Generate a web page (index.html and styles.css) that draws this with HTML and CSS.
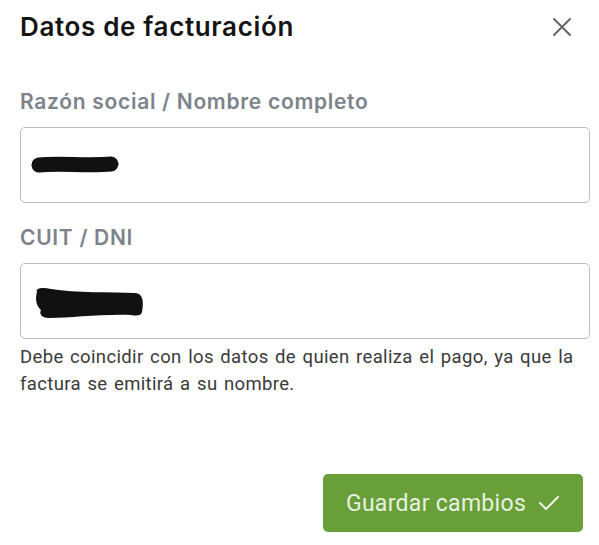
FILE: index.html
```html
<!DOCTYPE html>
<html lang="es">
<head>
<meta charset="utf-8">
<title>Datos de facturación</title>
<link rel="stylesheet" href="styles.css">
</head>
<body>
<div class="modal">
  <header class="modal-header">
    <h1 class="modal-title">Datos de facturación</h1>
    <button class="close-btn" aria-label="Cerrar">
      <svg width="20" height="20" viewBox="0 0 20 20"><path d="M2 2 L18 18 M18 2 L2 18" stroke="#666" stroke-width="2" fill="none" stroke-linecap="round"/></svg>
    </button>
  </header>
  <div class="field">
    <label class="field-label">Razón social / Nombre completo</label>
    <div class="field-input">
      <svg class="redact redact-1" width="90" height="22" viewBox="0 0 90 22"><path d="M8 11 C 25 9, 60 12, 80 10" stroke="#111" stroke-width="15" fill="none" stroke-linecap="round"/></svg>
    </div>
  </div>
  <div class="field">
    <label class="field-label">CUIT / DNI</label>
    <div class="field-input">
      <svg class="redact redact-2" width="120" height="36" viewBox="0 0 120 36"><path d="M6 6 C 4 2, 12 1, 20 3 C 45 7, 80 6, 104 7 C 112 7, 113 16, 111 26 C 110 30, 106 30, 100 29 C 70 28, 40 32, 18 32 C 10 32, 8 27, 10 24 C 5 20, 4 12, 6 6 Z" fill="#111"/></svg>
    </div>
    <p class="field-help">Debe coincidir con los datos de quien realiza el pago, ya que la factura se emitirá a su nombre.</p>
  </div>
  <footer class="modal-footer">
    <button class="save-btn">Guardar cambios
      <svg width="22" height="18" viewBox="0 0 22 18"><path d="M2 9 L8 15 L20 3" stroke="#eef4e8" stroke-width="2" fill="none" stroke-linecap="round" stroke-linejoin="round"/></svg>
    </button>
  </footer>
</div>
</body>
</html>
```

FILE: styles.css
```css
* { box-sizing: border-box; }
html, body { margin: 0; padding: 0; background: #fff; }
body { font-family: Inter, "Noto Sans", sans-serif; }

.modal {
  width: 570px;
  margin-left: 20px;
  padding-top: 12px;
}

.modal-header {
  display: flex;
  align-items: center;
  justify-content: space-between;
  padding-right: 18px;
}

.modal-title {
  margin: 0;
  font-size: 26px;
  letter-spacing: 0.65px;
  font-weight: 600;
  color: #141414;
  line-height: 30px;
}

.close-btn {
  border: 0;
  background: none;
  padding: 0;
  width: 20px;
  height: 20px;
  display: flex;
  cursor: pointer;
}

.field { margin-top: 48px; }
.field + .field { margin-top: 23px; }

.field-label {
  display: block;
  font-size: 21px;
  letter-spacing: 0.7px;
  font-weight: 600;
  color: #7d838a;
  line-height: 24px;
  margin-bottom: 13px;
}

.field-input {
  height: 76px;
  border: 1.5px solid #bdbdbd;
  border-radius: 5px;
  display: flex;
  align-items: center;
  padding-left: 10px;
}

.redact-2 { margin-top: 6px; }

.field-help {
  margin: 5px 0 0;
  font-family: Roboto, sans-serif;
  font-size: 18.5px;
  letter-spacing: 0.35px;
  word-spacing: 1.6px;
  line-height: 27px;
  color: #3a3a3a;
}

.modal-footer {
  display: flex;
  justify-content: flex-end;
  padding-right: 7px;
  margin-top: 76px;
}

.save-btn {
  width: 260px;
  height: 58px;
  border: 0;
  border-radius: 5px;
  background: #689f38;
  color: #e8f1e0;
  font-family: Roboto, sans-serif;
  font-size: 23px;
  letter-spacing: 0.3px;
  display: flex;
  align-items: center;
  justify-content: center;
  gap: 12px;
  cursor: pointer;
}
```
